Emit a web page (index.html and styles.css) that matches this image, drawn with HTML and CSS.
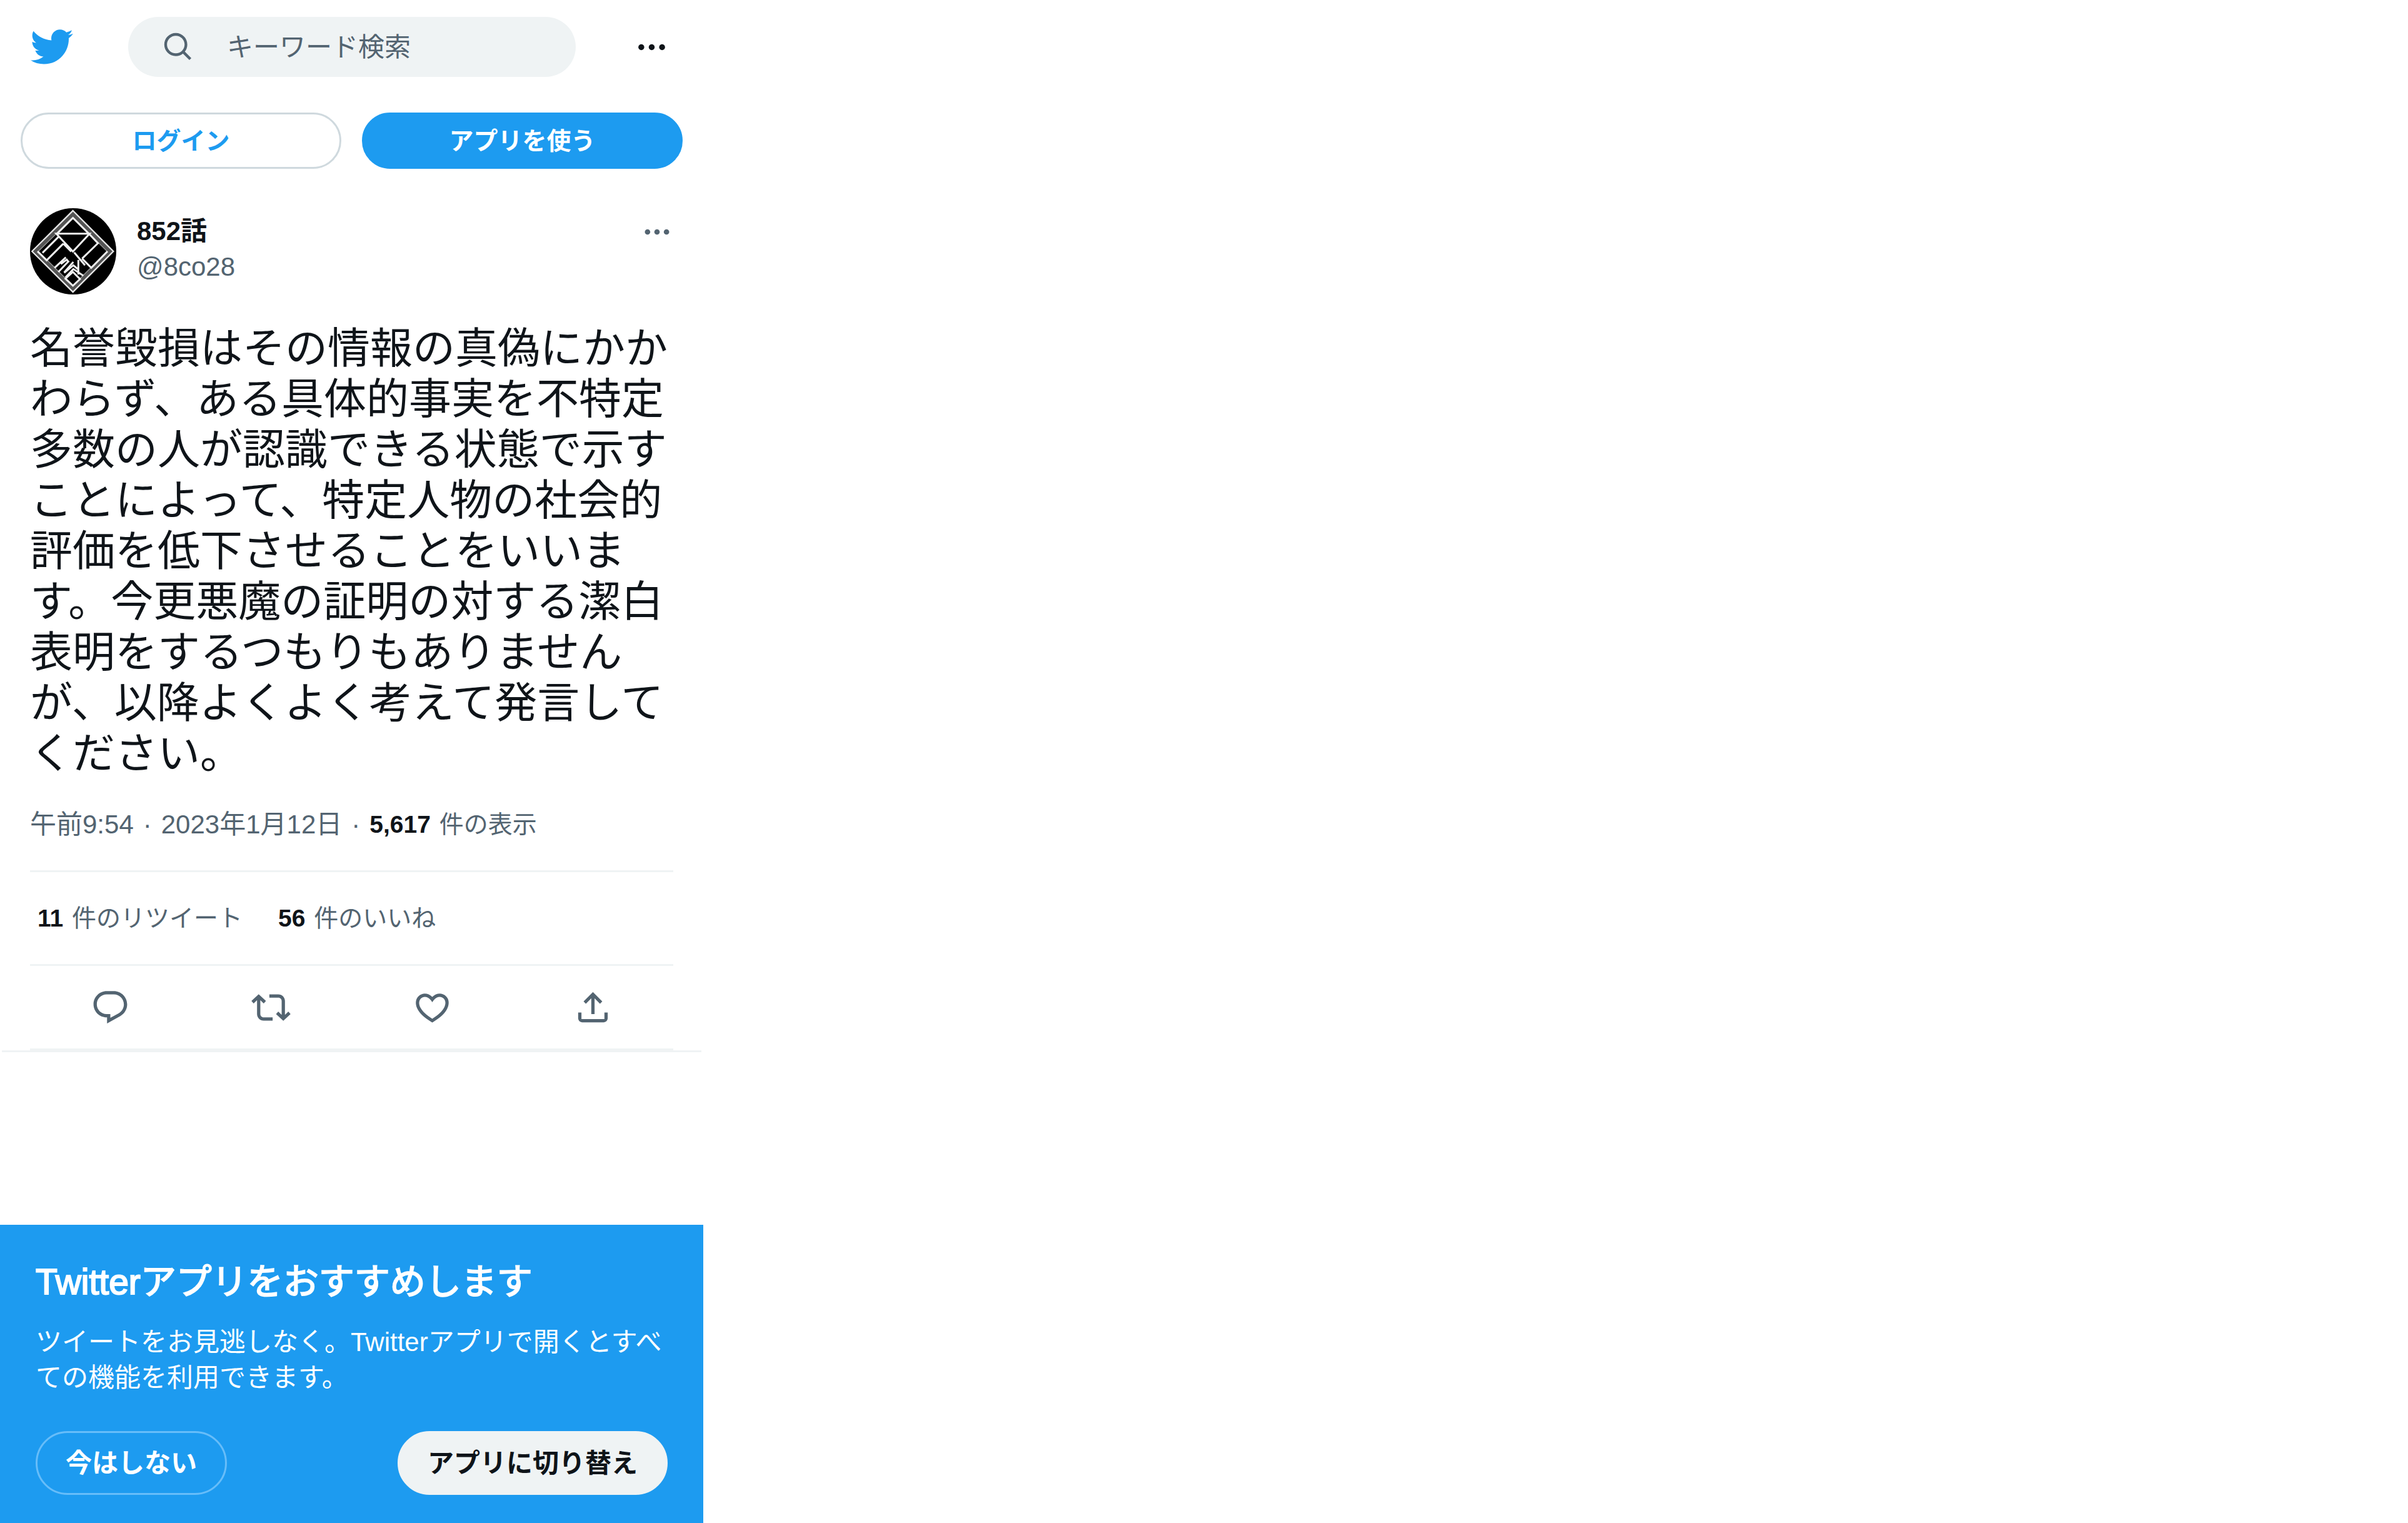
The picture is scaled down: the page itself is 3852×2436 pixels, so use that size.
FILE: index.html
```html
<!DOCTYPE html>
<html lang="ja">
<head>
<meta charset="utf-8">
<meta name="viewport" content="width=device-width, initial-scale=1">
<title>852話 / Twitter</title>
<link rel="stylesheet" href="styles.css">
</head>
<body>
<div class="page">
  <header class="header">
    <a class="logo" href="#" aria-label="Twitter">
      <svg class="icon-logo" viewBox="0 0 24 24"><path d="M23.643 4.937c-.835.37-1.732.62-2.675.733.962-.576 1.7-1.49 2.048-2.578-.9.534-1.897.922-2.958 1.13-.85-.904-2.06-1.47-3.4-1.47-2.572 0-4.658 2.086-4.658 4.66 0 .364.042.718.12 1.06-3.873-.195-7.304-2.05-9.602-4.868-.4.69-.63 1.49-.63 2.342 0 1.616.823 3.043 2.072 3.878-.764-.025-1.482-.234-2.11-.583v.06c0 2.257 1.605 4.14 3.737 4.568-.392.106-.803.162-1.227.162-.3 0-.593-.028-.877-.082.593 1.85 2.313 3.198 4.352 3.234-1.595 1.25-3.604 1.995-5.786 1.995-.376 0-.747-.022-1.112-.065 2.062 1.323 4.51 2.093 7.14 2.093 8.57 0 13.255-7.098 13.255-13.254 0-.2-.005-.402-.014-.602.91-.658 1.7-1.477 2.323-2.41z"/></svg>
    </a>
    <label class="search">
      <svg class="icon-small" viewBox="0 0 24 24"><path d="M10.25 3.75c-3.59 0-6.5 2.91-6.5 6.5s2.91 6.5 6.5 6.5c1.795 0 3.419-.726 4.596-1.904 1.178-1.177 1.904-2.801 1.904-4.596 0-3.59-2.91-6.5-6.5-6.5zm-8.5 6.5c0-4.694 3.806-8.5 8.5-8.5s8.5 3.806 8.5 8.5c0 1.986-.682 3.815-1.824 5.262l4.781 4.781-1.414 1.414-4.781-4.781c-1.447 1.142-3.276 1.824-5.262 1.824-4.694 0-8.5-3.806-8.5-8.5z"/></svg>
      <input class="search-input" type="text" placeholder="キーワード検索" aria-label="キーワード検索">
    </label>
    <button class="plain menu" type="button" aria-label="メニュー">
      <svg class="icon-menu" viewBox="0 0 24 24"><circle cx="5" cy="12" r="2"/><circle cx="12" cy="12" r="2"/><circle cx="19" cy="12" r="2"/></svg>
    </button>
  </header>

  <nav class="entry">
    <button class="pill pill-outline" type="button">ログイン</button>
    <button class="pill pill-primary" type="button">アプリを使う</button>
  </nav>

  <main class="tweet">
    <div class="author">
      <svg class="avatar" viewBox="24 38 414 414" role="img" aria-label="852話">
        <circle cx="231" cy="245" r="207" fill="#000"/>
        <g fill="none" stroke-linejoin="miter">
          <path d="M230 64L408 245L230 424L52 245Z" stroke="#555" stroke-width="18"/>
          <path d="M230 50L424 245L230 440L34 245Z" stroke="#e8e8e8" stroke-width="7"/>
          <path d="M64 245L230 82L394 245M64 245L230 410L394 245" stroke="#999" stroke-width="4"/>
          <g stroke="#f0f0f0" stroke-width="9">
            <path d="M154 160L230 84L306 160"/>
            <path d="M150 160H310L230 246Z"/>
            <path d="M162 174L84 252M184 208L104 288L60 245M184 208L222 246"/>
            <path d="M308 162L350 206L274 280M236 250L288 312M274 280L318 324L396 245"/>
            <path d="M142 324L196 274M160 344L208 294L198 284M188 346L232 296M204 282L172 306"/>
            <path d="M194 370L232 330L280 362M188 348L232 312L256 332M256 286V356"/>
            <path d="M230 344L264 378L230 410L194 376Z"/>
          </g>
        </g>
      </svg>
      <div class="names">
        <a class="name" href="#">852話</a>
        <a class="handle" href="#">@8co28</a>
      </div>
      <button class="plain more" type="button" aria-label="もっと見る">
        <svg class="icon-small" viewBox="0 0 24 24"><circle cx="5" cy="12" r="2"/><circle cx="12" cy="12" r="2"/><circle cx="19" cy="12" r="2"/></svg>
      </button>
    </div>

    <p class="body">名誉毀損はその情報の真偽にかかわらず、ある具体的事実を不特定多数の人が認識できる状態で示すことによって、特定人物の社会的評価を低下させることをいいます。今更悪魔の証明の対する潔白表明をするつもりもありませんが、以降よくよく考えて発言してください。</p>

    <div class="meta">
      <a class="time" href="#">午前9:54<span class="dot">·</span>2023年1月12日</a>
      <span class="dot">·</span>
      <span class="count"><b>5,617</b> 件の表示</span>
    </div>

    <div class="stats">
      <a class="count" href="#"><b>11</b> 件のリツイート</a>
      <a class="count" href="#"><b>56</b> 件のいいね</a>
    </div>

    <div class="actions">
      <button class="plain" type="button" aria-label="返信">
        <svg class="icon-action" viewBox="0 0 24 24"><path d="M1.751 10c0-4.42 3.584-8 8.005-8h4.366c4.49 0 8.129 3.64 8.129 8.13 0 2.96-1.607 5.68-4.196 7.11l-8.054 4.46v-3.69h-.067c-4.49.1-8.183-3.51-8.183-8.01zm8.005-6c-3.317 0-6.005 2.69-6.005 6 0 3.37 2.77 6.08 6.138 6.01l.351-.01h1.761v2.3l5.087-2.81c1.951-1.08 3.163-3.13 3.163-5.36 0-3.39-2.744-6.13-6.129-6.13H9.756z"/></svg>
      </button>
      <button class="plain" type="button" aria-label="リツイート">
        <svg class="icon-action" viewBox="0 0 24 24"><path d="M4.5 3.88l4.432 4.14-1.364 1.46L5.5 7.55V16c0 1.1.896 2 2 2H13v2H7.5c-2.209 0-4-1.79-4-4V7.55L1.432 9.48.068 8.02 4.5 3.88zM16.5 6H11V4h5.5c2.209 0 4 1.79 4 4v8.45l2.068-1.93 1.364 1.46-4.432 4.14-4.432-4.14 1.364-1.46 2.068 1.93V8c0-1.1-.896-2-2-2z"/></svg>
      </button>
      <button class="plain" type="button" aria-label="いいね">
        <svg class="icon-action" viewBox="0 0 24 24"><path d="M16.697 5.5c-1.222-.06-2.679.51-3.89 2.16l-.805 1.09-.806-1.09C9.984 6.01 8.526 5.44 7.304 5.5c-1.243.07-2.349.78-2.91 1.91-.552 1.12-.633 2.78.479 4.82 1.074 1.97 3.257 4.27 7.129 6.61 3.87-2.34 6.052-4.64 7.126-6.61 1.111-2.04 1.03-3.7.477-4.82-.561-1.13-1.666-1.84-2.908-1.91zm4.187 7.69c-1.351 2.48-4.001 5.12-8.379 7.67l-.503.3-.504-.3c-4.379-2.55-7.029-5.19-8.382-7.67-1.36-2.5-1.41-4.86-.514-6.67.887-1.79 2.647-2.91 4.601-3.01 1.651-.09 3.368.56 4.798 2.01 1.429-1.45 3.146-2.1 4.796-2.01 1.954.1 3.714 1.22 4.601 3.01.896 1.81.846 4.17-.514 6.67z"/></svg>
      </button>
      <button class="plain" type="button" aria-label="共有">
        <svg class="icon-action" viewBox="0 0 24 24"><path d="M12 2.59l5.7 5.7-1.41 1.42L13 6.41V16h-2V6.41l-3.3 3.3-1.41-1.42L12 2.59zM21 15v3.51C21 19.89 19.88 21 18.5 21H5.5C4.11 21 3 19.88 3 18.5V15h2v4h14v-4h2z"/></svg>
      </button>
    </div>
  </main>

  <aside class="promo">
    <h2 class="promo-title">Twitterアプリをおすすめします</h2>
    <p class="promo-text">ツイートをお見逃しなく。Twitterアプリで開くとすべての機能を利用できます。</p>
    <div class="promo-actions">
      <button class="promo-button promo-dismiss" type="button">今はしない</button>
      <button class="promo-button promo-switch" type="button">アプリに切り替え</button>
    </div>
  </aside>
</div>
</body>
</html>
```
FILE: styles.css
```css
:root {
  --blue: #1d9bf0;
  --ink: #0f1419;
  --muted: #536471;
  --line: #eff3f4;
  --outline: #cfd9de;
}

* {
  box-sizing: border-box;
}

body {
  margin: 0;
  background: #fff;
  color: var(--ink);
  font: 42px/57px "Liberation Sans", "Noto Sans CJK JP", sans-serif;
}

a {
  color: inherit;
  text-decoration: none;
}

button,
input {
  font: inherit;
}

svg {
  display: block;
  flex: none;
  fill: currentColor;
}

.page {
  display: flex;
  flex-direction: column;
  max-width: 1125px;
  min-height: 100vh;
}

.plain {
  display: block;
  padding: 0;
  border: 0;
  background: none;
  color: inherit;
}

.icon-logo { width: 72px; height: 72px; }
.icon-small { width: 52px; height: 52px; }
.icon-menu { width: 57px; height: 57px; }
.icon-action { width: 63px; height: 63px; }

/* Header */

.header {
  display: flex;
  align-items: center;
  padding: 27px 54px 0 46px;
}

.logo {
  color: var(--blue);
}

.search {
  display: flex;
  flex: 1;
  align-items: center;
  gap: 52px;
  min-width: 0;
  height: 96px;
  margin: 0 93px 0 87px;
  padding: 0 54px;
  border-radius: 48px;
  background: var(--line);
  color: var(--muted);
}

.search-input {
  flex: 1;
  min-width: 0;
  padding: 0;
  border: 0;
  outline: 0;
  background: none;
  color: var(--ink);
}

.search-input::placeholder {
  color: var(--muted);
  opacity: 1;
}

.entry {
  display: grid;
  grid-template-columns: 1fr 1fr;
  gap: 33px;
  padding: 57px 33px 63px;
}

.pill {
  height: 90px;
  padding: 0 48px;
  border: 3px solid var(--blue);
  border-radius: 45px;
  font-size: 39px;
  font-weight: 700;
}

.pill-outline {
  border-color: var(--outline);
  background: #fff;
  color: var(--blue);
}

.pill-primary {
  background: var(--blue);
  color: #fff;
}

/* Tweet */

.tweet {
  margin: 0 3px;
  padding: 0 45px;
  border-bottom: 3px solid var(--line);
}

.author {
  display: flex;
  align-items: flex-start;
  gap: 33px;
}

.avatar {
  width: 138px;
  height: 138px;
}

.names {
  display: flex;
  flex: 1;
  flex-direction: column;
  padding-top: 8px;
}

.name {
  font-weight: 700;
}

.handle {
  color: var(--muted);
}

.more {
  padding-top: 12px;
  color: var(--muted);
}

.body {
  margin: 46px 0 44px;
  font-size: 68px;
  line-height: 81px;
}

.meta {
  display: flex;
  padding-bottom: 45px;
  border-bottom: 3px solid var(--line);
  color: var(--muted);
}

.dot {
  padding: 0 15px;
}

.count {
  color: var(--muted);
  font-size: 39px;
}

.count b {
  margin-right: 3px;
  color: var(--ink);
}

.stats {
  display: flex;
  gap: 57px;
  padding: 45px 12px;
  border-bottom: 3px solid var(--line);
}

.actions {
  display: flex;
  align-items: center;
  justify-content: space-around;
  height: 135px;
  border-bottom: 3px solid var(--line);
  color: var(--muted);
}

/* App promotion */

.promo {
  margin-top: auto;
  padding: 57px 57px 45px;
  background: var(--blue);
  color: #fff;
}

.promo-title {
  margin: 0 0 34px;
  font-size: 57px;
  font-weight: 400;
  line-height: 68px;
  -webkit-text-stroke: 2px currentColor;
}

.promo-text {
  margin: 0 0 57px;
}

.promo-actions {
  display: flex;
  justify-content: space-between;
}

.promo-button {
  height: 102px;
  padding: 0 45px;
  border: 3px solid transparent;
  border-radius: 51px;
  font-weight: 700;
}

.promo-dismiss {
  border-color: #67bdf9;
  background: none;
  color: #fff;
}

.promo-switch {
  border-color: var(--line);
  background: var(--line);
  color: var(--ink);
}
```
